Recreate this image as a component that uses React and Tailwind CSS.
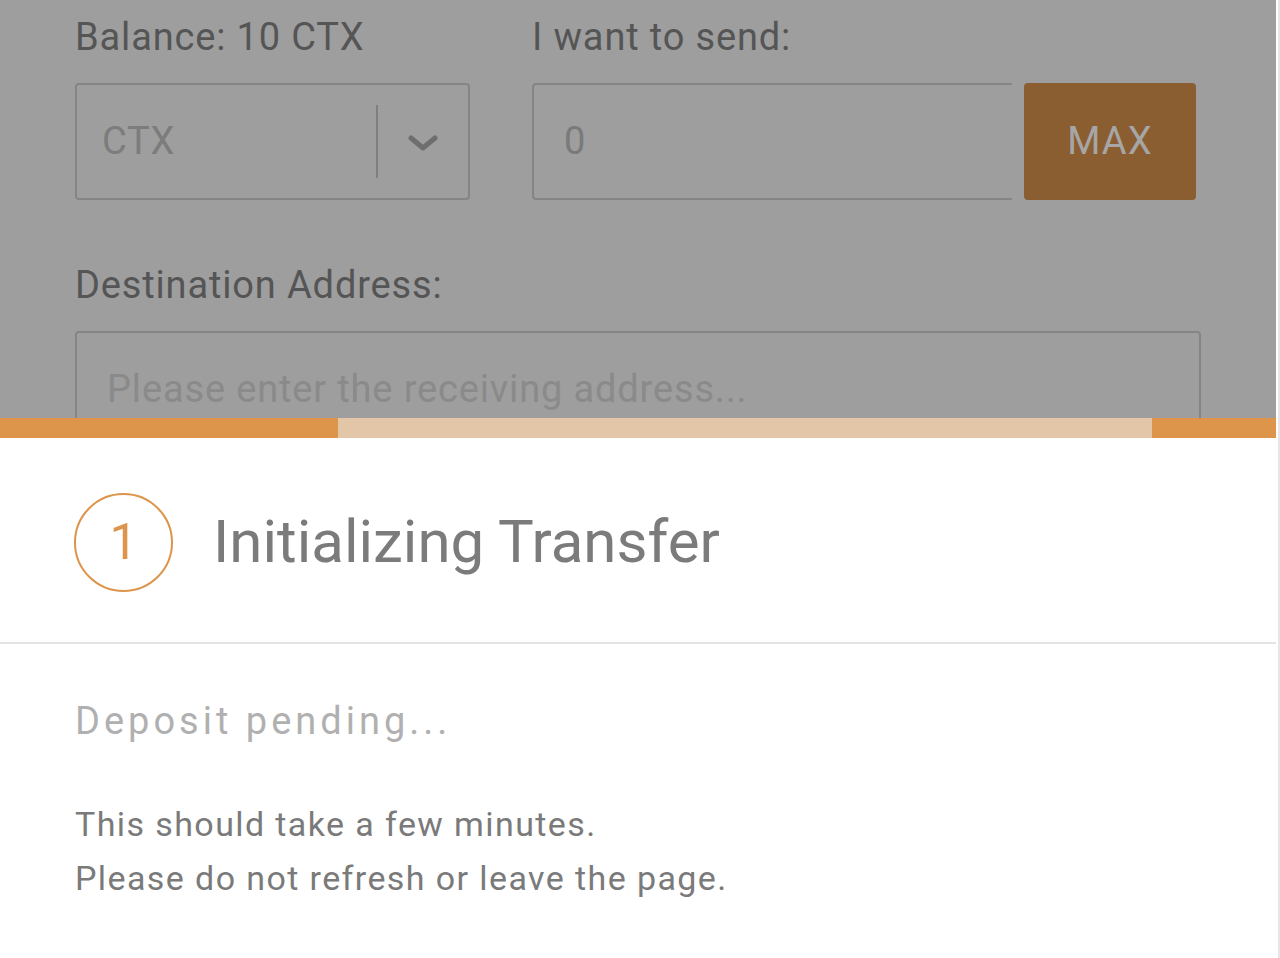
import React from 'react';

const Chevron = () => (
    <svg width="30" height="18" viewBox="0 0 30 18" fill="none">
        <path d="M3 4 L15 14 L27 4" stroke="#6e6e6e" strokeWidth="5" strokeLinecap="round" strokeLinejoin="round" />
    </svg>
);

const App = () => {
    return (
        <div className="flex h-[958px] w-full overflow-hidden bg-white font-['Roboto','Liberation_Sans',sans-serif]">
            <div className="flex w-[1276px] flex-col">
                {/* Dimmed transfer form */}
                <div className="h-[418px] overflow-hidden bg-[#9e9e9e] px-[75px] pt-[15px] tracking-[0.85px]">
                    <div className="flex">
                        <div className="w-[395px]">
                            <div className="text-[38px] leading-[45px] text-[#555555]">Balance: 10 CTX</div>
                            <div className="mt-[23px] flex h-[117px] items-center rounded-[4px] border-2 border-[#858585]">
                                <div className="w-[299px] pl-[25px] text-[38px] leading-[45px] text-[#7c7c7c]">CTX</div>
                                <div className="h-[73px] w-[2px] bg-[#7f7f7f]" />
                                <div className="flex flex-1 items-center justify-center pt-[2px]">
                                    <Chevron />
                                </div>
                            </div>
                        </div>
                        <div className="ml-[62px] flex-1">
                            <div className="text-[38px] leading-[45px] text-[#555555]">I want to send:</div>
                            <div className="mt-[23px] flex h-[117px] gap-[12px]">
                                <div className="flex w-[480px] items-center rounded-l-[4px] border-2 border-r-0 border-[#858585] pl-[30px] text-[38px] leading-[45px] text-[#7a7a7a]">
                                    0
                                </div>
                                <button className="flex w-[172px] items-center justify-center rounded-[4px] bg-[#8b5e32] text-[38px] leading-[45px] tracking-[1.2px] text-[#a6a6a6]">
                                    MAX
                                </button>
                            </div>
                        </div>
                    </div>

                    <div className="mt-[63px] text-[38px] leading-[45px] text-[#555555]">Destination Address:</div>
                    <div className="mt-[23px] flex h-[117px] items-center rounded-[4px] border-2 border-[#858585] pl-[30px] text-[38px] leading-[45px] text-[#8a8a8a]">
                        Please enter the receiving address...
                    </div>
                </div>

                {/* Progress bar */}
                <div className="flex h-[20px]">
                    <div className="w-[338px] bg-[#dd944b]" />
                    <div className="w-[814px] bg-[#e3c5a8]" />
                    <div className="flex-1 bg-[#dd944b]" />
                </div>

                {/* Status sheet */}
                <div className="flex-1 bg-white">
                    <div className="flex h-[204px] items-center gap-[40px] px-[74px] pt-[4px]">
                        <div className="flex h-[99px] w-[99px] items-center justify-center rounded-full border-2 border-[#dd944b] text-[50px] leading-none text-[#dd944b]">
                            1
                        </div>
                        <div className="text-[60px] leading-[70px] text-[#7b7b7b]">Initializing Transfer</div>
                    </div>
                    <div className="h-[2px] bg-[#e4e4e4]" />
                    <div className="px-[75px]">
                        <div className="mt-[55px] text-[38px] leading-[45px] tracking-[4px] text-[#b0b0b0]">Deposit pending...</div>
                        <div className="mt-[53px] text-[34px] leading-[54px] tracking-[1.4px] text-[#7a7a7a]">
                            <p>This should take a few minutes.</p>
                            <p>Please do not refresh or leave the page.</p>
                        </div>
                    </div>
                </div>
            </div>
            <div className="flex w-[4px]">
                <div className="w-[2px] bg-white" />
                <div className="w-[2px] bg-[#e6e6e6]" />
            </div>
        </div>
    );
};

export default App;
